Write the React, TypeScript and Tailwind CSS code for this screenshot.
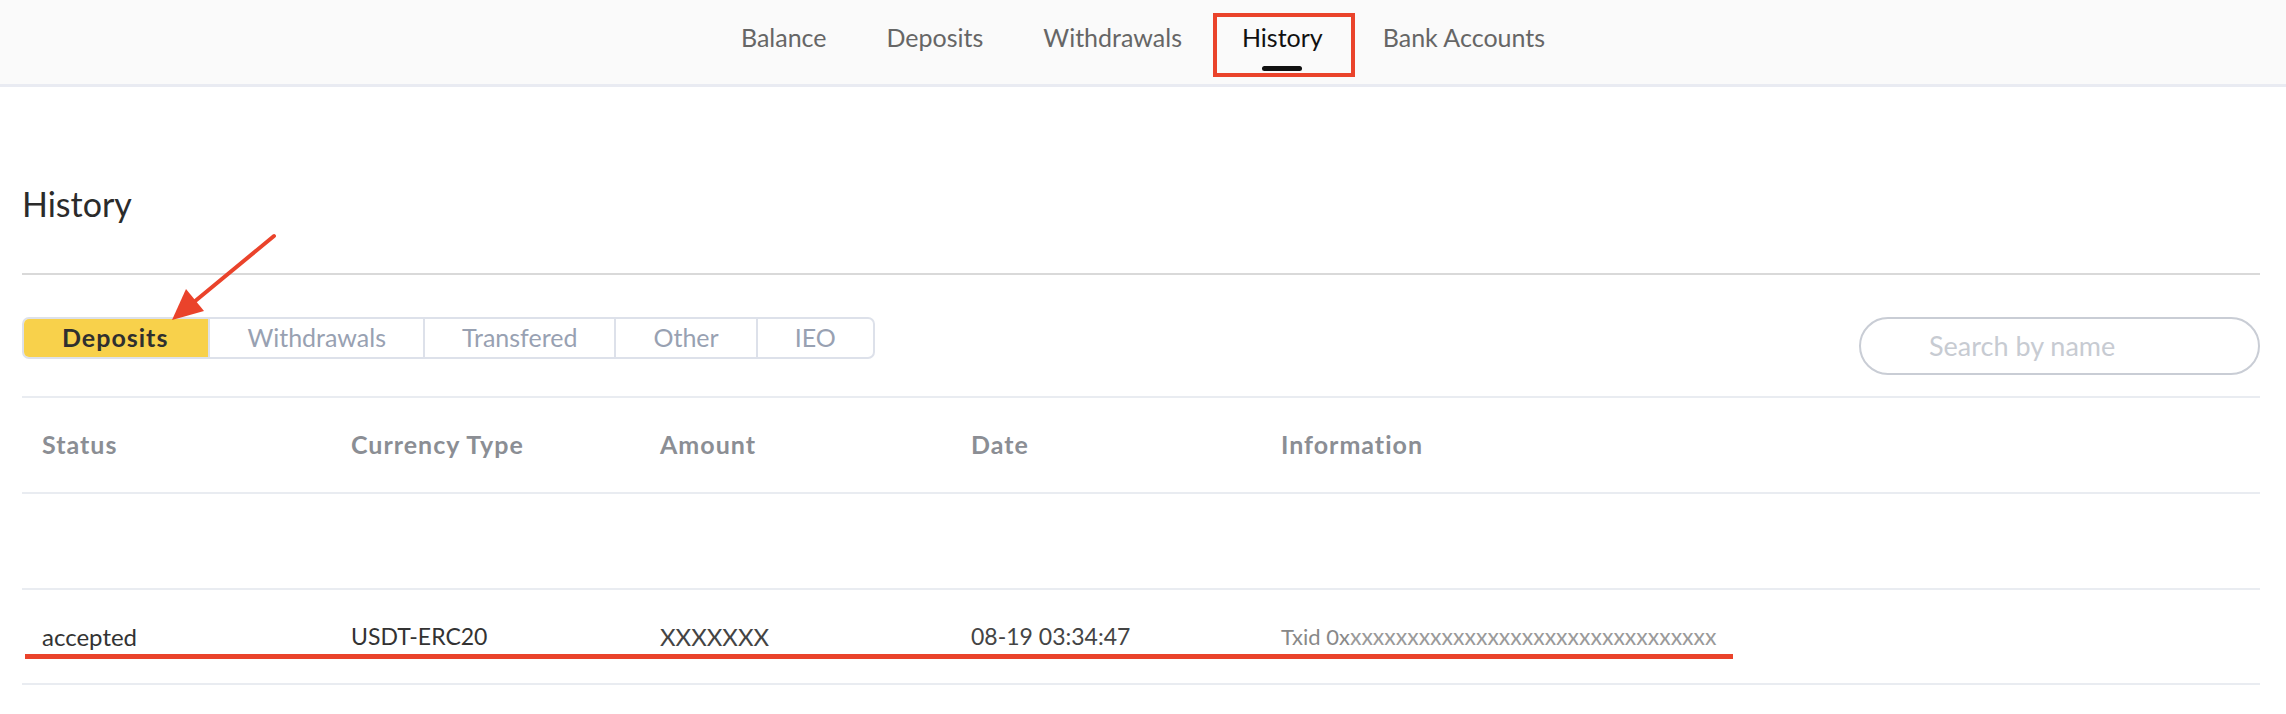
const navItems = ['Balance', 'Deposits', 'Withdrawals', 'History', 'Bank Accounts'];
const tabs = ['Deposits', 'Withdrawals', 'Transfered', 'Other', 'IEO'];
const columns = ['Status', 'Currency Type', 'Amount', 'Date', 'Information'];

const TopNav = () => {
  return (
    <div className="h-[87px] bg-[#fafafa] border-b-[3px] border-[#e9ebf2] flex justify-center gap-[60px]">
      {navItems.map((item) => {
        const active = item === 'History';
        return (
          <div key={item} className="relative h-full pt-[20px]">
            <span className={active ? 'text-[25px] leading-[34px] text-[#111]' : 'text-[25px] leading-[34px] text-[#666]'}>
              {item}
            </span>
            {active && (
              <>
                <span className="absolute left-0 right-0 mx-auto top-[66px] h-[5px] w-[40px] rounded-full bg-[#111]" />
                {/* annotation box */}
                <span className="absolute -left-[29px] -right-[32px] top-[13px] h-[64px] border-[4px] border-[#ea432b]" />
              </>
            )}
          </div>
        );
      })}
    </div>
  );
};

const Arrow = () => (
  <svg className="absolute left-[160px] top-[225px]" width="125" height="105" viewBox="0 0 125 105">
    <line x1="114" y1="11" x2="34" y2="77" stroke="#ea432b" strokeWidth="4" strokeLinecap="round" />
    <polygon points="12,95 44,86 26,64" fill="#ea432b" />
  </svg>
);

export default function App() {
  return (
    <div className="relative w-[2286px] h-[714px] bg-white font-['Lato','Open_Sans',sans-serif] overflow-hidden">
      <TopNav />
      <div className="pl-[22px] pr-[26px]">
        <h2 className="mt-[97px] h-[40px] text-[34px] leading-[40px] text-[#2b2b2b]">History</h2>
        <div className="mt-[49px] h-[2px] bg-[#d9d9d9]" />
        <div className="mt-[42px] flex justify-between items-start">
          <div className="flex h-[42px] rounded-[7px] border-2 border-[#dde1ea] overflow-hidden">
            {tabs.map((tab, i) => (
              <div
                key={tab}
                className={
                  i === 0
                    ? 'flex items-center px-[40px] bg-[#f8d14b] text-[25px] font-bold tracking-[1px] text-[#2f2f2f] -my-[2px] -ml-[2px]'
                    : 'flex items-center px-[37px] text-[25px] text-[#98a1b2] border-l-2 border-[#dde1ea]'
                }
              >
                {tab}
              </div>
            ))}
          </div>
          <div className="w-[401px] h-[58px] rounded-full border-2 border-[#c9cdd5] flex items-center pl-[68px]">
            <span className="text-[27px] text-[#c7cbd2]">Search by name</span>
          </div>
        </div>
        <div className="mt-[21px] border-t-2 border-[#e9ecf1]">
          <div className="h-[96px] border-b-2 border-[#e9ecf1] grid grid-cols-[309px_309px_311px_310px_1fr] items-center px-[20px]">
            {columns.map((c) => (
              <span key={c} className="text-[25px] font-bold tracking-[1px] text-[#8b8e94]">{c}</span>
            ))}
          </div>
          <div className="h-[96px] border-b-2 border-[#e9ecf1]" />
          <div className="relative h-[95px] border-b-2 border-[#e9ecf1] grid grid-cols-[309px_309px_311px_310px_1fr] items-center px-[20px]">
            <span className="text-[24px] text-[#333]">accepted</span>
            <span className="text-[23px] text-[#333]">USDT-ERC20</span>
            <span className="text-[24px] text-[#444]">XXXXXXX</span>
            <span className="text-[23px] text-[#444]">08-19 03:34:47</span>
            <span className="text-[22px] text-[#888]">
              Txid 0x<span className="text-[23px] text-[#9a9a9a]">{'x'.repeat(32)}</span>
            </span>
            {/* annotation underline */}
            <span className="absolute left-[3px] top-[64px] w-[1708px] h-[5px] bg-[#ea432b]" />
          </div>
        </div>
      </div>
      <Arrow />
    </div>
  );
}
